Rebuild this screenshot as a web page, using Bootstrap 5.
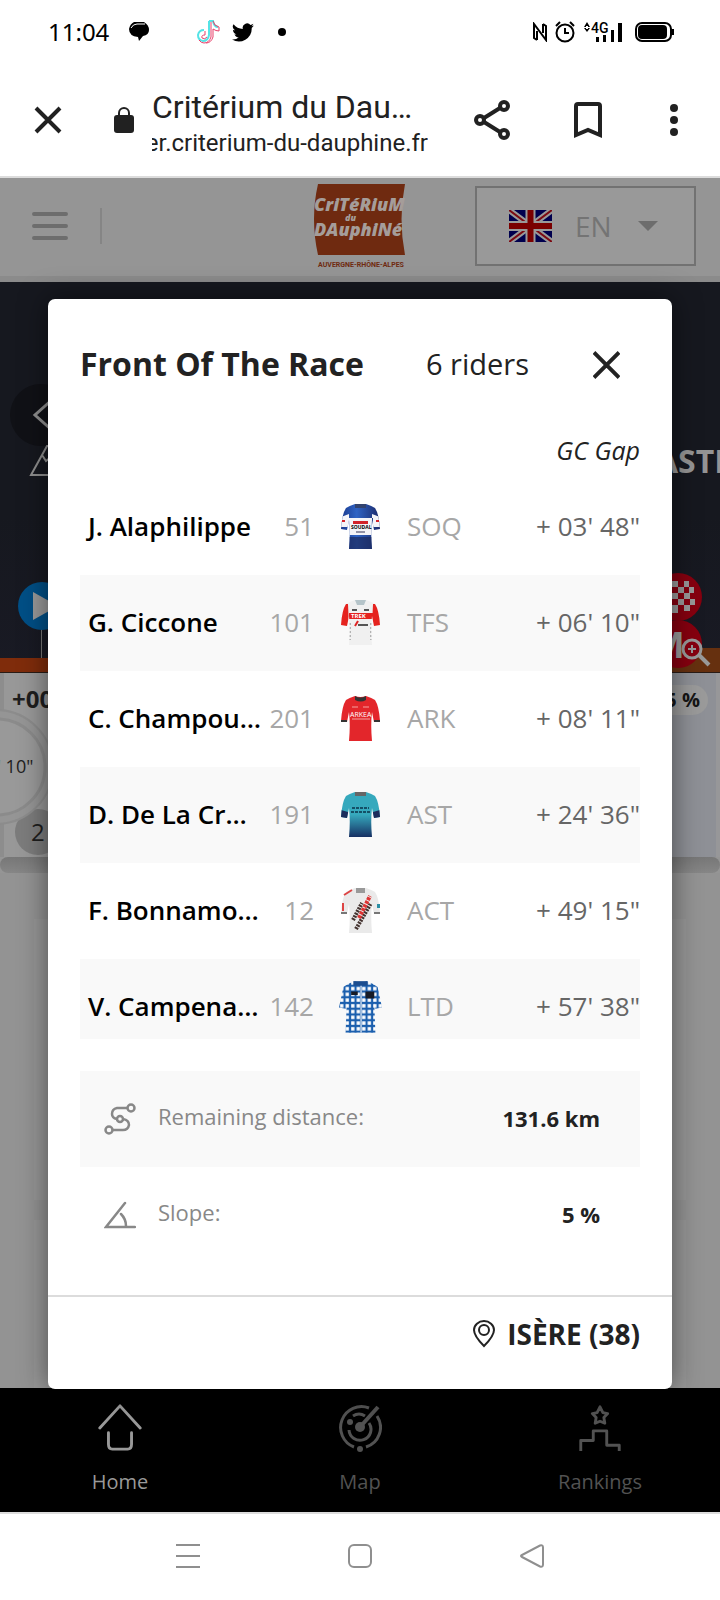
<!DOCTYPE html>
<html lang="en">
<head>
<meta charset="utf-8">
<meta name="viewport" content="width=device-width, initial-scale=1">
<title>Critérium du Dauphiné</title>
<link href="https://cdn.jsdelivr.net/npm/bootstrap@5.3.0/dist/css/bootstrap.min.css" rel="stylesheet">
<style>
body{font-family:"Open Sans",sans-serif;color:#222;background:#fff;min-height:100vh;overflow-x:hidden}
svg{display:block;flex:none}
button{background:none;border:0;padding:0;color:inherit}
.statusbar{height:64px;padding:0 46px 0 48px;color:#000}
.clock{font-family:"Noto Sans",sans-serif;font-size:24px;line-height:32px}
.status-apps{margin-left:20px}
.status-bird{margin:0 24px 0 12px}
.chrome{height:114px;padding:0 42px 0 34px;border-bottom:2px solid #dcdcdc;font-family:Roboto,sans-serif;color:#212121}
.chrome-lock{margin-left:52px}
.chrome-text{margin:0 46px 0 18px;padding-top:10px;min-width:0}
.chrome-title{font-size:32px;line-height:36px}
.chrome-url{font-size:24px;line-height:36px;white-space:nowrap;overflow:hidden}
.chrome-mark{margin-left:64px}
.chrome-more{margin-left:68px}
.site{background:#959595}
.topbar{height:104px;border-bottom:6px solid #8b8b8b;padding:0 24px 2px}
.side{flex:1 1 0}
.rule{width:2px;height:36px;background:#858585;margin-left:32px}
.lang{border:2px solid #727272;height:80px;width:221px;background:#999;padding:0 36px 0 32px}
.lang select{appearance:none;border:0;background:none;color:#747474;font-size:28px;line-height:40px;padding:0;width:60px;margin-left:23px}
.stage{height:391px;background:linear-gradient(#16181f 60%,#191a24);border-bottom:1px solid #2a1c16}
.stage-right{width:64px;overflow:hidden}
.stage-name{font-size:32px;line-height:40px;font-weight:700;color:#949494;margin-top:159px}
.ribbon{height:184px;background:#989898}
.ribbon-right{width:64px;background:#8e9096;border-right:4px solid #979799;padding:12px 8px 0 0}
.pct{background:#9a9a9a;color:#151515;border-radius:15px;font-size:20px;line-height:30px;font-weight:700;padding:0 8px;margin-left:-20px}
.track{height:16px;border-radius:8px;background:linear-gradient(#777,#868686)}
.feed{padding:46px 34px 0;height:515px;background:#939393}
.feed-card{background:#979797;flex:3 1 0}
.feed-card:first-child{flex-grow:5;margin-bottom:20px}
.tabs{height:124px;background:#000;color:#525252}
.tabs a{color:inherit;text-decoration:none;font-size:20px;line-height:28px;flex:1 1 0}
.tabs a.on{color:#999}
.tabs svg{margin:15px 0 15px}
.sysnav{border-top:2px solid #dcdcdc;gap:148px;color:#8f8f8f;min-height:88px;padding-bottom:2px}
.sheet{position:absolute;top:121px;left:48px;right:48px;background:#fff;border-radius:7px;box-shadow:0 0 28px rgba(0,0,0,.5)}
.sheet-head{padding:40px 52px 0 32px;height:133px}
.sheet-head h1{font-size:32px;line-height:50px;font-weight:700;margin:0}
.sheet-head button{margin:12px 0 0 64px}
.count{font-size:29px;line-height:50px}
.gap-head{font-size:25px;font-style:italic;line-height:36px;font-weight:400}
.riders{width:100%;table-layout:fixed;font-size:26px;line-height:40px}
.riders .c-name{width:180px}
.riders .c-num{width:54px}
.riders .c-shirt{width:93px}
.riders .c-gap{width:130px}
.riders td,.riders th{padding:0}
.riders td{height:96px;padding-bottom:2px;vertical-align:middle;white-space:nowrap}
.riders thead th{height:47px;vertical-align:top}
.riders tr:nth-child(even) td{background:#f9f9f9}
.riders tr:last-child td{height:80px;padding-top:27px;padding-bottom:0;vertical-align:top}
.riders .jersey svg{margin:0 auto}
.riders tr:last-child td.jersey{padding-top:21px}
.riders td.who{color:#000;font-weight:600;padding-left:8px}
.dim{color:#a7a7a7}
.gap-time{color:#666}
.facts{margin:32px 32px 0}
.fact{height:96px;padding:0 40px 0 24px}
.fact:first-child{background:#f9f9f9}
.fact dt{font-size:22px;line-height:32px;font-weight:400;color:#888;margin-left:22px;padding-bottom:6px}
.fact dd{font-size:22px;line-height:32px;font-weight:700;margin:0;padding-bottom:2px}
.place{border-top:2px solid #dcdcdc;margin-top:32px;padding:17px 32px;height:94px;font-size:28px;line-height:40px;font-weight:700}
.place svg{margin:6px 12px 0 0}
</style>
</head>
<body class="d-flex flex-column">

<svg width="0" height="0" class="position-absolute" aria-hidden="true">
  <defs>
    <path id="shirt" d="M14 1Q19.500 3 25 1Q31 3 34 5Q38 11 39 26L33 27L31 17Q29.500 30 31 46H8Q9.500 30 8 17L6 27L0 26Q1 11 5 5Q8 3 14 1Z"/>
    <clipPath id="cut"><use href="#shirt"/></clipPath>
    <linearGradient id="teal" x1="0" y1="0" x2="0" y2="1"><stop offset=".5" stop-color="#36a9bd"/><stop offset="1" stop-color="#173063"/></linearGradient>
    <linearGradient id="navy" x1="0" y1="0" x2="1" y2="0"><stop offset="0" stop-color="#1a3a8e"/><stop offset=".4" stop-color="#2f63c4"/><stop offset="1" stop-color="#1b2a6b"/></linearGradient>
    <pattern id="check" width="5" height="5" patternUnits="userSpaceOnUse"><rect width="5" height="5" fill="#1b5fae"/><rect x="1" y="1" width="3" height="3" fill="#fff"/></pattern>
  </defs>
</svg>

<div class="statusbar d-flex align-items-center">
  <span class="clock">11:04</span>
  <svg width="20" height="20" viewBox="0 0 20 20" class="status-apps"><path d="M5 0h10q5 3 5 8t-6 6l-4 5-1-4Q0 14 0 7 1 2 5 0Z"/><path d="M2 6q2-4 6-4h8" fill="none" stroke="#fff"/></svg>
  <svg width="23" height="26" viewBox="0 0 23 26" class="ms-5" fill="none"><path d="M12 2v14q-1 6-6 6-5-1-5-6 1-5 6-5M12 2h4q1 6 5 6" stroke="#55e3e6" stroke-width="2"/><path d="M14 3v15q-2 6-7 6-3 0-5-3M8 12v4q-4 0-3 3 3 2 5-1M16 2q1 5 6 6v4q-3 0-6-2v8q-2 6-7 6" stroke="#e8416b"/></svg>
  <svg width="22" height="19" viewBox="0 0 24 20" class="status-bird"><path d="M24 2.400a10 10 0 0 1-2.800.8A5 5 0 0 0 23.300.5a10 10 0 0 1-3.100 1.200 4.900 4.900 0 0 0-8.400 4.500A14 14 0 0 1 1.700 1a4.900 4.900 0 0 0 1.500 6.600A5 5 0 0 1 1 7c0 2.400 1.700 4.400 3.900 4.900a5 5 0 0 1-2.200.1 4.900 4.900 0 0 0 4.600 3.400A10 10 0 0 1 0 17.500 14 14 0 0 0 21.500 5Z"/></svg>
  <svg width="8" height="8" viewBox="0 0 8 8"><circle cx="4" cy="4" r="4"/></svg>
  <div class="d-flex align-items-center ms-auto">
    <svg width="14" height="20" viewBox="0 0 14 20" fill="none" stroke="#000" stroke-width="2"><path d="M4 18l-3-2V2l12 16V4l-3-2M4 9v9M10 2v9"/></svg>
    <svg width="20" height="22" viewBox="0 0 20 22" class="ms-2 me-2" fill="none" stroke="#000" stroke-width="2"><circle cx="10" cy="12" r="8.500"/><path d="M10 7v5h4M1 5l4-4M19 5l-4-4"/></svg>
    <svg width="40" height="22" viewBox="0 0 40 22"><path d="M1 6l3-5 3 5H5V5H3v1zM1 7l3 4 3-4H5v1H3V7zM13 16h3v5h-3zM20 14h3v7h-3zM28 9h3v12h-3zM35 2h4v19h-4z"/><text x="8" y="12" font-family="Roboto" font-size="14" font-weight="500">4G</text></svg>
    <svg width="39" height="20" viewBox="0 0 39 20" style="margin-left:12px"><rect x="1" y="1" width="35" height="18" rx="6" fill="none" stroke="#000" stroke-width="2"/><rect x="3" y="3" width="29" height="14" rx="4"/><path d="M37 7h2v6h-2z"/></svg>
  </div>
</div>

<div class="chrome d-flex align-items-center">
  <button aria-label="Close tab"><svg width="28" height="28" viewBox="0 0 28 28" stroke="#212121" stroke-width="4"><path d="M2 2l24 24M26 2L2 26"/></svg></button>
  <svg width="20" height="26" viewBox="0 0 20 26" class="chrome-lock"><path d="M5 9V6a5 5 0 0 1 10 0v3" fill="none" stroke="#212121" stroke-width="2"/><rect y="8" width="20" height="18" rx="3" fill="#212121"/></svg>
  <div class="chrome-text flex-grow-1">
    <div class="chrome-title text-truncate">Critérium du Dau…</div>
    <div class="chrome-url d-flex justify-content-end"><span>er.criterium-du-dauphine.fr</span></div>
  </div>
  <button aria-label="Share"><svg width="36" height="40" viewBox="0 0 36 40" fill="none" stroke="#212121" stroke-width="4"><circle cx="30" cy="6" r="4"/><circle cx="30" cy="34" r="4"/><circle cx="6" cy="20" r="4"/><path d="M10 18l16-10M10 22l16 10"/></svg></button>
  <button aria-label="Bookmark" class="chrome-mark"><svg width="28" height="36" viewBox="0 0 28 36" fill="none" stroke="#212121" stroke-width="4"><path d="M2 33V4q0-2 2-2h20q2 0 2 2v29l-12-5z"/></svg></button>
  <button aria-label="More" class="chrome-more"><svg width="8" height="32" viewBox="0 0 8 32" fill="#212121"><circle cx="4" cy="4" r="4"/><circle cx="4" cy="16" r="4"/><circle cx="4" cy="28" r="4"/></svg></button>
</div>

<main class="site position-relative">
  <header class="topbar d-flex align-items-center">
    <div class="side d-flex align-items-center">
      <button aria-label="Menu" class="ms-2"><svg width="36" height="30" viewBox="0 0 36 30" stroke="#6d6d6d" stroke-width="4" stroke-linecap="round"><path d="M2 3h32M2 15h32M2 27h32"/></svg></button>
      <div class="rule"></div>
    </div>
    <svg width="92" height="86" viewBox="0 0 92 86" class="overflow-visible" role="img" aria-label="Critérium du Dauphiné"><path d="M4 1H91Q84 36 91 72H4Q-4 36 4 1Z" fill="#6f2a10"/><g fill="#a59d9a" font-family="Open Sans" font-weight="800" font-style="italic"><text x="0" y="28" font-size="18">CriTéRiuM</text><text x="31" y="38" font-size="9">du</text><text x="0" y="53" font-size="18">DAuphiNé</text></g><text x="47" y="84" text-anchor="middle" fill="#6f2a10" font-family="Roboto" font-size="7" font-weight="700">AUVERGNE-RHÔNE-ALPES</text></svg>
    <div class="side d-flex justify-content-end">
      <div class="lang d-flex align-items-center">
        <svg width="43" height="32" viewBox="0 0 43 32"><rect width="43" height="32" fill="#00004e"/><path d="M0 0l43 32M43 0L0 32" stroke="#999" stroke-width="6"/><path d="M0 0l43 32M43 0L0 32" stroke="#7c0a12" stroke-width="2"/><path d="M21.500 0v32M0 16h43" stroke="#999" stroke-width="10"/><path d="M21.500 0v32M0 16h43" stroke="#7a0000" stroke-width="6"/></svg>
        <select aria-label="Language"><option>EN</option></select>
        <svg width="20" height="10" viewBox="0 0 20 10" class="ms-auto"><path d="M0 0h20L10 10z" fill="#6d6d6d"/></svg>
      </div>
    </div>
  </header>

  <section class="stage d-flex justify-content-between">
    <svg width="80" height="390" viewBox="0 0 80 390" aria-hidden="true"><circle cx="41" cy="133" r="31" fill="#101116"/><path d="M54 116L35 133l19 17" fill="none" stroke="#8f8f8f" stroke-width="3"/><path d="M80 193H31l16-29h9M42 173l4 6 5-4" fill="none" stroke="#8f8f8f" stroke-width="2"/><path d="M41.500 345v31" stroke="#777"/><circle cx="42" cy="324" r="24" fill="#004f86"/><path d="M33 310v28l25-14z" fill="#999"/><path d="M0 376h80v14H0z" fill="#7f2c0b"/></svg>
    <div class="stage-right d-flex flex-column justify-content-between">
      <div class="stage-name">ASTI</div>
      <svg width="64" height="100" viewBox="0 -8 64 100" aria-hidden="true"><path d="M0 68h64v24H0z" fill="#66300f"/><circle cx="22" cy="17" r="24" fill="#86000f"/><circle cx="22" cy="64" r="24" fill="#86000f"/><path d="M16 1h6v6h-6zM28 1h5v6h-5zM22 7h6v6h-6zM33 7h5v6h-5zM16 13h6v6h-6zM28 13h6v6h-6zM22 19h6v6h-6zM34 19h5v6h-5zM16 25h6v8h-6zM28 25h6v6h-6z" fill="#999"/><text x="12" y="78" text-anchor="middle" font-family="Roboto" font-size="36" font-weight="700" fill="#999">M</text><circle cx="36" cy="69" r="9" fill="#86000f" stroke="#999" stroke-width="3"/><path d="M36 65v8M32 69h8" stroke="#999" stroke-width="2"/><path d="M43 75l10 10" stroke="#999" stroke-width="4"/></svg>
    </div>
  </section>

  <section class="ribbon d-flex justify-content-between">
    <svg width="100" height="184" viewBox="0 0 100 184"><path d="M0 0h4v184H0z" fill="#8d8d8d"/><circle cx="38" cy="159" r="23" fill="#7c7c7c"/><circle cx="-4" cy="94" r="57" fill="#959595" stroke="#8c8c8c" stroke-width="2"/><circle cx="-3" cy="94" r="48" fill="#999" stroke="#8b8b8b" stroke-width="3"/><g fill="#1e1e1e" font-family="Open Sans"><text x="12" y="35" font-size="24" font-weight="700">+00</text><text x="-3" y="100" font-size="18">' 10"</text><text x="31" y="168" font-size="24">2</text></g></svg>
    <div class="ribbon-right"><div class="pct text-end">5 %</div></div>
  </section>
  <div class="track"></div>
  <div class="feed d-flex flex-column">
    <div class="feed-card"></div>
    <div class="feed-card"></div>
  </div>

  <nav class="tabs d-flex" aria-label="Main">
    <a href="#home" class="on d-flex flex-column align-items-center"><svg width="44" height="50" viewBox="0 0 44 52" fill="none" stroke="currentColor" stroke-width="3" stroke-linecap="round" stroke-linejoin="round"><path d="M1 26L22 3l21 23M10 31v12q0 5 4 5h16q4 0 4-5V31"/></svg>Home</a>
    <a href="#map" class="d-flex flex-column align-items-center"><svg width="44" height="50" viewBox="0 0 44 50" fill="none" stroke="currentColor" stroke-width="3"><path d="M31 5A20.500 20.500 0 1 0 16 44M28 44A20.500 20.500 0 0 0 39 13M15 13q6-4 12 0M11 27a11 11 0 1 0 20-7"/><path d="M22 24L40 4" stroke-width="4"/><circle cx="22" cy="24" r="5" fill="currentColor" stroke="none"/><circle cx="12" cy="19" r="3" fill="currentColor" stroke="none"/><circle cx="22" cy="46" r="3" fill="currentColor" stroke="none"/></svg>Map</a>
    <a href="#rankings" class="d-flex flex-column align-items-center"><svg width="44" height="50" viewBox="0 0 44 52" fill="none" stroke="currentColor" stroke-width="3" stroke-linejoin="round"><path d="M22 4l3 6 5 1-4 4 1 6-5-2-5 2 1-6-4-4 5-1z"/><path d="M2 50V39h13V29h14v15h13v6"/></svg>Rankings</a>
  </nav>

  <div class="sheet" role="dialog" aria-labelledby="sheet-title">
    <div class="sheet-head d-flex align-items-start">
      <h1 id="sheet-title">Front Of The Race</h1>
      <span class="count ms-auto">6 riders</span>
      <button aria-label="Close"><svg width="27" height="28" viewBox="0 0 28 28" stroke="#222" stroke-width="4"><path d="M1 1l26 26M27 1L1 27"/></svg></button>
    </div>
    <div class="px-4"><div class="px-2">
      <table class="riders">
        <colgroup><col class="c-name"><col class="c-num"><col class="c-shirt"><col><col class="c-gap"></colgroup>
        <thead><tr><th colspan="5" class="gap-head text-end">GC Gap</th></tr></thead>
        <tbody>
          <tr><td class="who">J. Alaphilippe</td><td class="dim text-end">51</td><td class="jersey"><svg width="39" height="47" viewBox="0 0 39 47"><g clip-path="url(#cut)"><path fill="url(#navy)" d="M0 0h39v47H0z"/><path fill="#f4f4f8" d="M0 14l8-3v13H0zM39 14l-8-3v13h8zM8 15h24v17H8z"/><path fill="#d2232a" d="M12 18h15v3H12zM1 17h3v2H1zM35 17h3v2h-3z"/><path fill="#1d2b5e" d="M8 34h24v13H8z" opacity=".7"/></g><text x="10" y="26" font-size="5" font-weight="700">SOUDAL</text><path d="M15 29h9" stroke="#335"/><path d="M14 1h11v4H14z" fill="#32436f"/></svg></td><td class="dim">SOQ</td><td class="gap-time text-end">+ 03' 48"</td></tr>
          <tr><td class="who">G. Ciccone</td><td class="dim text-end">101</td><td class="jersey"><svg width="39" height="47" viewBox="0 0 39 47"><g clip-path="url(#cut)"><path fill="#f0f0f0" d="M0 0h39v47H0z"/><path fill="#e5231f" d="M0 5h7l1 22H0zM32 5h7v22h-8zM8 14h24v6H8z"/><path d="M9 24v17M30 24v17" stroke="#777" stroke-dasharray="2 2"/></g><text x="10" y="19" font-size="6" font-weight="700" fill="#fff">TREK</text><path d="M14 1h11l-2 5h-7z" fill="#b5c4c9"/><path d="M14 27l3-5" stroke="#d22" stroke-width="2"/><path d="M17 26h10M11 11h5M23 11h5" stroke="#555" stroke-width="2"/></svg></td><td class="dim">TFS</td><td class="gap-time text-end">+ 06' 10"</td></tr>
          <tr><td class="who">C. Champou…</td><td class="dim text-end">201</td><td class="jersey"><svg width="39" height="47" viewBox="0 0 39 47"><use href="#shirt" fill="#e3262b"/><text x="9" y="22" font-size="7" fill="#fff">ARKEA</text><path d="M11 24h18M11 12h6M22 12h6" stroke="#f5a0a0"/><path d="M14 1q5 3 11 0v4q-5 3-11 0z" fill="#333"/><path d="M0 26h6M33 26h6" stroke="#333" stroke-width="2"/></svg></td><td class="dim">ARK</td><td class="gap-time text-end">+ 08' 11"</td></tr>
          <tr><td class="who">D. De La Cr…</td><td class="dim text-end">191</td><td class="jersey"><svg width="39" height="47" viewBox="0 0 39 47"><use href="#shirt" fill="url(#teal)"/><g clip-path="url(#cut)"><path d="M0 19l7 2v6H0zM39 19l-7 2v6h7z" fill="#1c2c5c"/></g><path d="M11 17h17M10 21h19" stroke="#145066" stroke-width="2" stroke-dasharray="3 1"/><path d="M14 1h11v4H14z" fill="#666"/></svg></td><td class="dim">AST</td><td class="gap-time text-end">+ 24' 36"</td></tr>
          <tr><td class="who">F. Bonnamo…</td><td class="dim text-end">12</td><td class="jersey"><svg width="39" height="47" viewBox="0 0 39 47"><use href="#shirt" fill="#eaeaea"/><path d="M3 8l8-5M2 16v8" stroke="#d44" stroke-width="2"/><path d="M12 33l9-17M15 42l15-26" stroke="#43322f" stroke-width="4" stroke-dasharray="2 1"/><path d="M18 31L29 9" stroke="#d33" stroke-width="4" stroke-dasharray="3 1"/><path d="M15 1h9v5h-9z" fill="#999"/><path d="M0 26h6M33 26h6" stroke="#777" stroke-width="2"/><path d="M36 17h3v4h-3z" fill="#2a8fa5"/></svg></td><td class="dim">ACT</td><td class="gap-time text-end">+ 49' 15"</td></tr>
          <tr><td class="who">V. Campena…</td><td class="dim text-end">142</td><td class="jersey"><svg width="43" height="54" viewBox="0 0 39 47" preserveAspectRatio="none"><path d="M14 1Q19.500 3 25 1Q31 3 35 6L39 24L33 25L32 20L33 46H6L7 20L6 25L0 24L4 6Q8 3 14 1Z" fill="url(#check)"/><path d="M13 1h13v4H13z" fill="#1b4d8f"/><path d="M24 10h8v6h-8zM11 10h6v3h-6z" fill="#161b26"/><path d="M20 5v41" stroke="#fff"/></svg></td><td class="dim">LTD</td><td class="gap-time text-end">+ 57' 38"</td></tr>
        </tbody>
      </table>
    </div></div>
    <dl class="facts">
      <div class="fact d-flex align-items-center">
        <svg width="32" height="32" viewBox="0 0 32 32" fill="none" stroke="#888" stroke-width="2.500"><circle cx="27" cy="5" r="3.500"/><circle cx="5" cy="27" r="3.500"/><circle cx="16" cy="16" r="3"/><path d="M23 5H13q-5 1-5 6 0 4 5 5M19 16q6 1 6 6-1 5-6 5H9"/></svg>
        <dt>Remaining distance:</dt><dd class="ms-auto">131.6 km</dd>
      </div>
      <div class="fact d-flex align-items-center">
        <svg width="32" height="28" viewBox="0 0 32 28" fill="none" stroke="#888" stroke-width="2.500" stroke-linecap="round"><path d="M21 2L2 26h29M17 13q5 5 5 12"/></svg>
        <dt>Slope:</dt><dd class="ms-auto">5 %</dd>
      </div>
    </dl>
    <div class="place d-flex justify-content-end">
      <svg width="22" height="28" viewBox="0 0 22 28" fill="none" stroke="#222" stroke-width="2"><path d="M11 26Q1 16 1 10a10 9 0 0 1 20 0q0 6-10 16z"/><circle cx="11" cy="10" r="5"/></svg>ISÈRE (38)
    </div>
  </div>
</main>

<div class="sysnav d-flex flex-grow-1 align-items-center justify-content-center">
  <button aria-label="Recent apps"><svg width="24" height="24" viewBox="0 0 24 24" stroke="currentColor" stroke-width="2"><path d="M0 1h24M0 12h24M0 23h24"/></svg></button>
  <button aria-label="Home screen"><svg width="24" height="24" viewBox="0 0 24 24" fill="none" stroke="currentColor" stroke-width="2"><rect x="1" y="1" width="22" height="22" rx="5"/></svg></button>
  <button aria-label="Back"><svg width="24" height="24" viewBox="0 0 24 24" fill="none" stroke="currentColor" stroke-width="2"><path d="M20 1.500q3-1 3 2v17q0 3-3 2L2 13q-2-1 0-2z"/></svg></button>
</div>
<script src="https://cdn.jsdelivr.net/npm/bootstrap@5.3.0/dist/js/bootstrap.bundle.min.js"></script>
</body>
</html>
